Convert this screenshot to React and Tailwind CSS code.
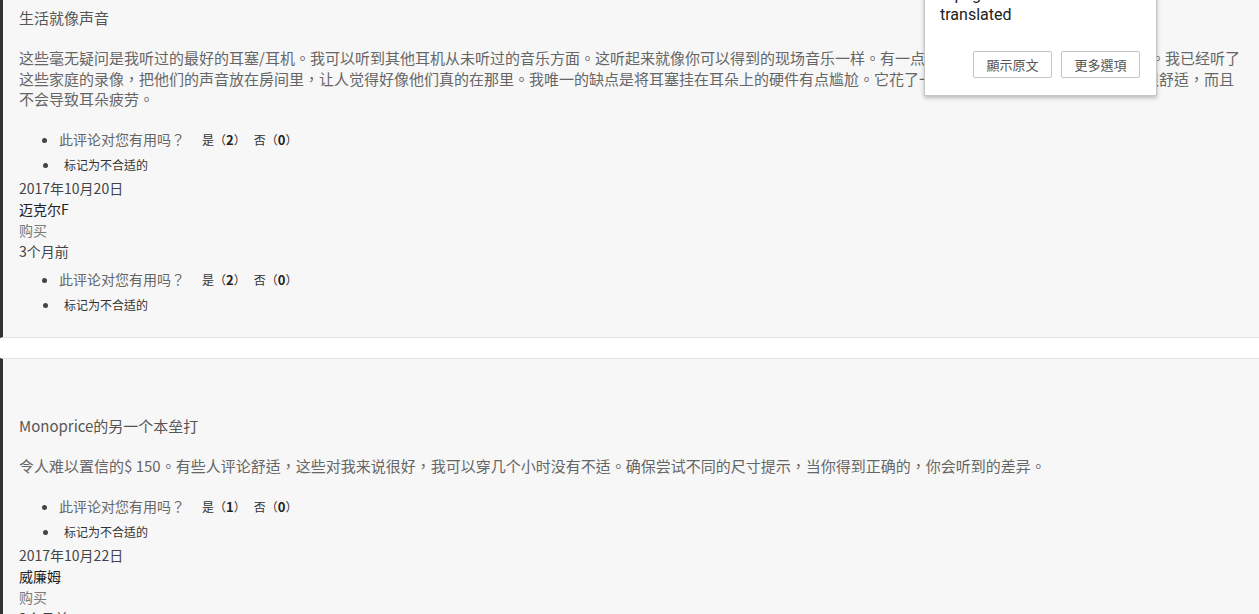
export default function App() {
  const font = { fontFamily: '"Noto Sans CJK TC", "Noto Sans CJK SC", sans-serif' };
  const latin = { fontFamily: 'Roboto, "Liberation Sans", sans-serif' };
  const Votes = ({ yes, top = "mt-4" }) => (
    <ul className={`${top} list-disc pl-10 marker:text-[#444]`}>
      <li className="h-[26px] text-[14px] leading-[26px] text-[#666]">
        <span>此评论对您有用吗？</span>
        <span className="ml-[17px] text-[12px] text-[#333]">
          是（<b className="text-[13px] font-bold text-[#222]">{yes}</b>）
        </span>
        <span className="ml-2 text-[12px] text-[#333]">
          否（<b className="text-[13px] font-bold text-[#222]">0</b>）
        </span>
      </li>
      <li className="h-[26px] pl-[5px] text-[12px] leading-[26px] text-[#333]">标记为不合适的</li>
    </ul>
  );
  const Meta = ({ date, name, ago }) => (
    <div className="text-[14px] leading-[21px]">
      <div className="text-[#444]">{date}</div>
      <div className="text-[#222]">{name}</div>
      <div className="text-[#7a7a7a]">购买</div>
      {ago && <div className="text-[#444]">{ago}</div>}
    </div>
  );
  return (
    <div className="relative h-[614px] w-[1259px] overflow-hidden bg-white" style={font}>
      <div className="border-b border-l-[3px] border-b-[#e3e3e3] border-l-[#333] bg-[#f7f7f7] pb-[19px] pl-4 pr-4 pt-2">
        <div className="text-[15px] leading-[20px] text-[#555]">生活就像声音</div>
        <p className="mt-5 whitespace-nowrap text-[15px] leading-[20.5px] text-[#666]">
          这些毫无疑问是我听过的最好的耳塞/耳机。我可以听到其他耳机从未听过的音乐方面。这听起来就像你可以得到的现场音乐一样。有一点失真，但总体来说声音非常地清晰。我已经听了
          <br />
          这些家庭的录像，把他们的声音放在房间里，让人觉得好像他们真的在那里。我唯一的缺点是将耳塞挂在耳朵上的硬件有点尴尬。它花了一段时间才习惯，但是现在戴起来很舒适，而且
          <br />
          不会导致耳朵疲劳。
        </p>
        <Votes yes={2} />
        <Meta date="2017年10月20日" name="迈克尔F" ago="3个月前" />
        <Votes yes={2} top="mt-1" />
      </div>

      <div className="mt-5 border-l-[3px] border-t border-l-[#333] border-t-[#e3e3e3] bg-[#f7f7f7] pb-10 pl-4 pr-4 pt-[57px]">
        <div className="text-[15px] leading-[20px] text-[#555]">Monoprice的另一个本垒打</div>
        <p className="mt-5 whitespace-nowrap text-[15px] leading-[20.5px] text-[#666]">
          令人难以置信的$ 150。有些人评论舒适，这些对我来说很好，我可以穿几个小时没有不适。确保尝试不同的尺寸提示，当你得到正确的，你会听到的差异。
        </p>
        <Votes yes={1} top="mt-[17px]" />
        <Meta date="2017年10月22日" name="威廉姆" ago="3个月前" />
      </div>

      <div className="absolute left-[924px] top-[-40px] w-[233px] border border-[#c6c6c6] bg-white pb-[17px] pl-[15px] pr-[16px] pt-[44px] shadow-[0_2px_4px_rgba(0,0,0,0.25)]">
        <div className="relative">
          <div className="absolute bottom-full left-0 whitespace-nowrap text-[16px] leading-[20px] text-[#222]" style={latin}>
            A page has been
          </div>
          <div className="text-[16px] leading-[20px] text-[#222]" style={latin}>
            translated
          </div>
        </div>
        <div className="mt-[26px] flex justify-end gap-[9px]">
          <button className="h-[27px] w-[79px] rounded-[2px] border border-[#c4c4c4] bg-white text-[13px] text-[#555]">
            顯示原文
          </button>
          <button className="h-[27px] w-[79px] rounded-[2px] border border-[#c4c4c4] bg-white text-[13px] text-[#555]">
            更多選項
          </button>
        </div>
      </div>
    </div>
  );
}
